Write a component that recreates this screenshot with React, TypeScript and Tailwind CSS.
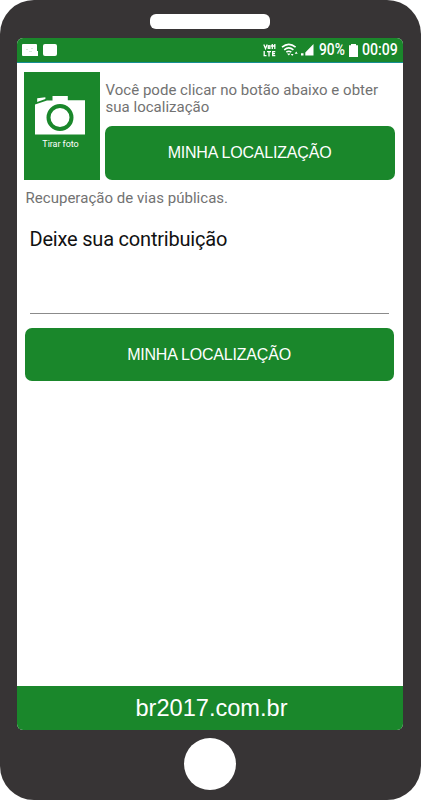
import type { ReactNode } from "react";

function StatusIcons() {
  return (
    <div className="flex h-full items-center">
      <svg width="13" height="14" viewBox="0 0 13 14" fill="none" stroke="white" strokeWidth="1.3">
        <path d="M.8 1.5 2.5 5.5 4.2 1.5M9.3 1v5M7.8 3h4.7M11.8 1v5" />
        <rect x="5.3" y="2.8" width="1.6" height="2.5" />
        <path d="M1.2 8v4.7H3.5M4 8.6h4M6 8.6v4.8M12.3 8.6H9.7v4.1h2.6M9.7 10.7h2.3" />
      </svg>
      <svg className="ml-[5px]" width="18" height="14" viewBox="0 0 18 14" fill="none" stroke="white">
        <path d="M1 4.2Q7.8-1.6 14.6 4.2" strokeWidth="1.6" />
        <path d="M3.2 6.8q4.6-3.8 9.2 0" strokeWidth="1.6" />
        <path d="M5.3 9.2q2.5-2 5 0" strokeWidth="1.6" />
        <path d="M7.8 12.6 6 10.6h3.6z" fill="white" stroke="none" />
        <path d="M9.8 11h2.8l-1.4 2zM13.7 10.8h3l-1.5-2.2z" fill="white" stroke="none" />
      </svg>
      <svg className="ml-[2px]" width="13" height="12" viewBox="0 0 13 12" fill="white">
        <path d="M12.5 0v11.5H4.3V8.4zM0 9.3h2.5v2.2H0z" />
      </svg>
    </div>
  );
}

function CameraIcon() {
  return (
    <svg width="50" height="39" viewBox="0 0 50 39" fill="white">
      <path d="M2.2 2.2 10.4 1.2V3L2.2 6z" />
      <path d="M0 8.4 12 4.6H17.5V0h15.3v4.2H50V38.5H0z" />
      <circle cx="25" cy="21.5" r="11.5" fill="none" stroke="#1a872b" strokeWidth="4" />
    </svg>
  );
}

function GreenButton({ className, children }: { className: string; children: ReactNode }) {
  return (
    <button
      type="button"
      className={`flex items-center justify-center rounded-[7px] bg-[#1a872b] font-['Liberation_Sans',sans-serif] text-[16px] tracking-[-0.2px] text-white ${className}`}
    >
      {children}
    </button>
  );
}

export default function App() {
  return (
    <div className="h-[800px] w-[421px] bg-white">
      <div className="flex h-full flex-col items-center rounded-[34px] bg-[#373435] pt-[13.5px] pr-px font-[Roboto,sans-serif]">
        <div className="h-[15px] w-[120px] shrink-0 rounded-[6px] bg-white" />
        <div className="mt-[9.5px] flex h-[691.5px] w-[386px] shrink-0 flex-col overflow-hidden rounded-[6px] bg-white">
          <header className="flex h-[25px] shrink-0 items-center justify-between border-b border-[#168e94] bg-[#1a872b] pr-[5px] pl-[4.5px] text-white">
            <div className="flex gap-[5px]">
              <svg width="16" height="12" viewBox="0 0 16 12" fill="white">
                <path d="M1 0h13q1 0 1 1v6h1v5H1Q0 12 0 11V1Q0 0 1 0z" />
                <path d="M4 5h2v1H4zM9 4h2v1H9zM7 7h3v1H7z" fill="#d5ebd8" />
              </svg>
              <span className="h-[12px] w-[14px] rounded-[2px] bg-white" />
            </div>
            <div className="flex items-center text-[16px] leading-none font-medium">
              <StatusIcons />
              <span className="ml-[5px] w-[26px] origin-left scale-x-[0.86] whitespace-nowrap">90%</span>
              <svg className="ml-[4px]" width="9" height="13" viewBox="0 0 9 13" fill="white">
                <path d="M2 0h5v1.2h2V13H0V1.2h2z" />
              </svg>
              <span className="ml-[4px] w-[36px] origin-left scale-x-[0.88] whitespace-nowrap">00:09</span>
            </div>
          </header>

          <main className="flex-1 px-[7px] pt-[9px]">
            <section className="flex gap-[4.5px]">
              <button
                type="button"
                className="flex h-[108px] w-[76px] shrink-0 flex-col items-center bg-[#1a872b] pt-[24px] pr-[4px] text-[9px] leading-[11px] text-white"
              >
                <CameraIcon />
                <span className="mt-[4px] ml-px tracking-[-0.05px]">Tirar foto</span>
              </button>
              <div className="flex flex-col">
                <p className="mt-[10px] h-[43.5px] pl-px text-[15px] leading-[17px] tracking-[0.02px] text-[#727272]">
                  Você pode clicar no botão abaixo e obter
                  <br />
                  sua localização
                </p>
                <GreenButton className="h-[54px] w-[290px]">MINHA LOCALIZAÇÃO</GreenButton>
              </div>
            </section>
            <p className="mt-[9px] ml-[1.5px] text-[15px] leading-[18px] tracking-[0.03px] text-[#727272]">
              Recuperação de vias públicas.
            </p>
            <div className="mt-[20px] ml-[5.5px] h-[87px] w-[359px] border-b border-[#8b8b8b] text-[20px] leading-[24px] tracking-[-0.2px] text-[#111]">
              Deixe sua contribuição
            </div>
            <GreenButton className="mt-[14px] ml-[0.5px] h-[53px] w-[369px]">MINHA LOCALIZAÇÃO</GreenButton>
          </main>

          <footer className="flex h-[44px] shrink-0 items-center justify-center bg-[#1a872b] pt-[2px] pl-[3px] font-['Liberation_Sans',sans-serif] text-[23.6px] text-white">
            br2017.com.br
          </footer>
        </div>
        <div className="mt-[8px] size-[52px] shrink-0 rounded-full bg-white" />
      </div>
    </div>
  );
}
